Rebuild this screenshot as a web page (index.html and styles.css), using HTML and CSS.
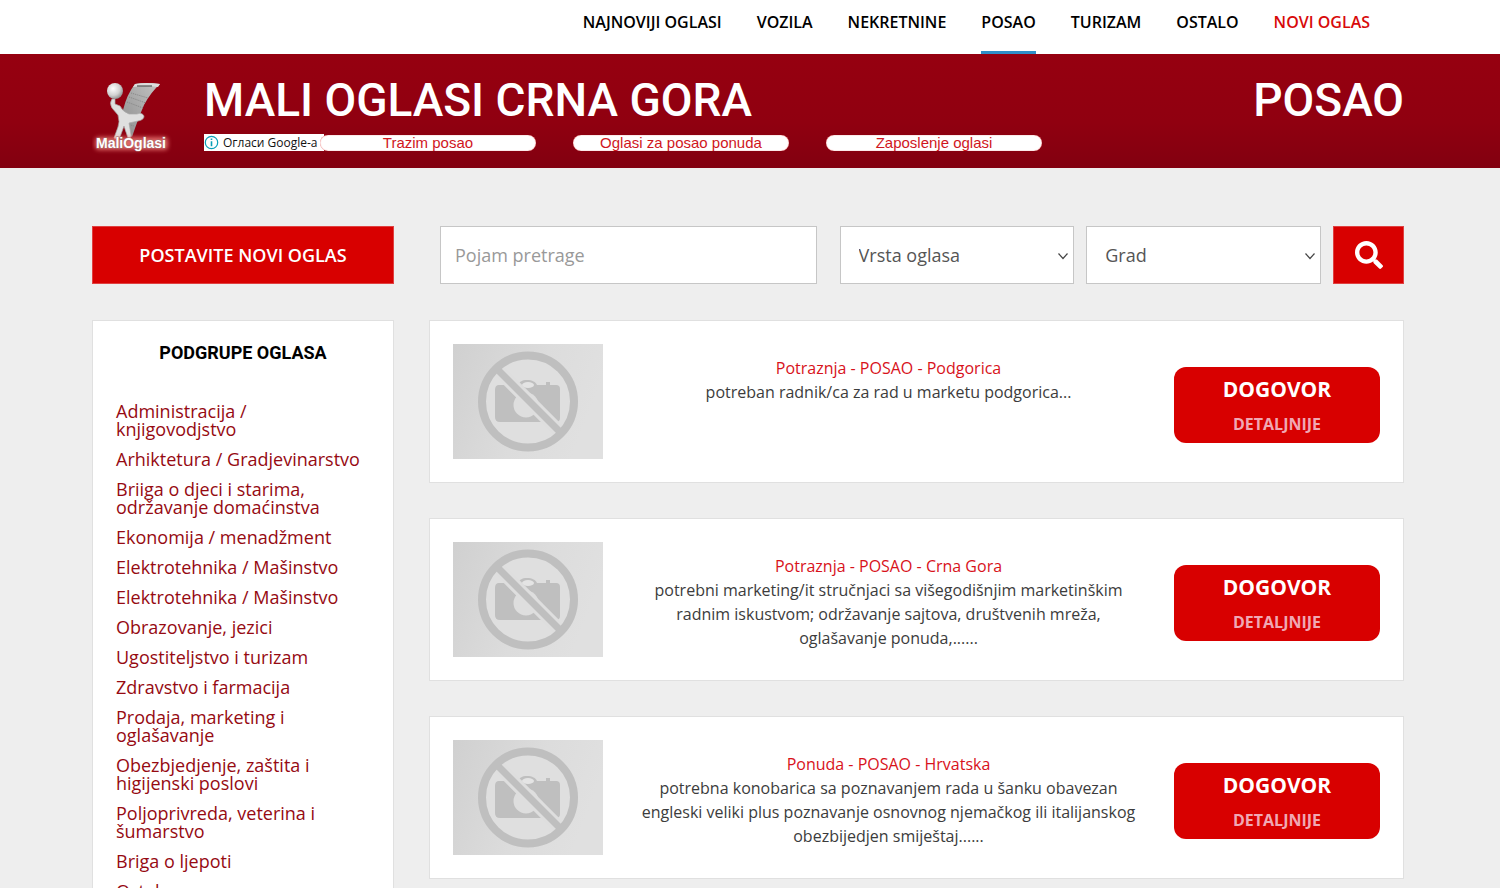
FILE: index.html
```html
<!DOCTYPE html>
<html lang="sr-ME">
<head>
<meta charset="utf-8">
<title>Mali Oglasi Crna Gora - Posao</title>
<link rel="stylesheet" href="styles.css">
</head>
<body>
<svg class="sprite" aria-hidden="true">
  <defs>
    <linearGradient id="photo-bg" x1="0" y1="0" x2="1" y2=".3">
      <stop offset="0" stop-color="#d0d0d0"/><stop offset=".6" stop-color="#dcdcdc"/><stop offset="1" stop-color="#e0e0e0"/>
    </linearGradient>
  </defs>
  <symbol id="no-photo" viewBox="0 0 150 115">
    <rect width="150" height="115" fill="url(#photo-bg)"/>
    <circle cx="75" cy="57.500" r="45" fill="#dfdfdf"/>
    <path d="M46 41h19c1-3 4-5 9-5s9 2 10 5h9v-3h4v3h6q4 0 4 4v29q0 4-4 4H47q-5 0-5-5V46q0-5 4-5z" fill="#bfbfbf"/>
    <ellipse cx="75" cy="41" rx="6" ry="3" fill="#e4e4e4"/>
    <circle cx="73" cy="61" r="12.500" fill="#dedede"/>
    <path d="M46 27 108 89" stroke="#dedede" stroke-width="13"/>
    <path d="M45 26 108 89" stroke="#bfbfbf" stroke-width="7"/>
    <circle cx="75" cy="57.500" r="46" fill="none" stroke="#bfbfbf" stroke-width="8"/>
  </symbol>
  <symbol id="chevron" viewBox="0 0 12 12"><path d="M1.500 3.500 6 8.500l4.500-5" fill="none" stroke="#444" stroke-width="1.200"/></symbol>
</svg>

<nav class="topnav" aria-label="Glavni meni">
  <a href="#">Najnoviji oglasi</a>
  <a href="#">Vozila</a>
  <a href="#">Nekretnine</a>
  <a href="#" class="is-active">Posao</a>
  <a href="#">Turizam</a>
  <a href="#">Ostalo</a>
  <a href="#" class="is-new">Novi oglas</a>
</nav>

<header class="banner">
  <a href="#" class="logo" aria-label="MaliOglasi">
    <svg width="80" height="76" viewBox="0 0 80 76">
      <defs>
        <radialGradient id="ball" cx=".38" cy=".35" r=".7"><stop offset="0" stop-color="#fff"/><stop offset=".6" stop-color="#d2d2d2"/><stop offset="1" stop-color="#8c8c8c"/></radialGradient>
        <linearGradient id="paper" x1="1" y1="0" x2="0" y2="1"><stop offset="0" stop-color="#c4c4c4"/><stop offset="1" stop-color="#8d8d8d"/></linearGradient>
        <filter id="glow" x="-20%" y="-60%" width="140%" height="220%"><feGaussianBlur stdDeviation="2.200"/></filter>
      </defs>
      <path d="M43 4Q54 2 68 4 59 12 52 25 46 39 40 57L34 52Q30 40 31 30 35 14 43 4z" fill="url(#paper)"/>
      <path d="M43 4Q54 2 68 4L66 7Q54 5 41 7z" fill="#ddd"/>
      <path d="M45 6h15" stroke="#555" stroke-width="1.200" fill="none"/>
      <path d="M39 13l17 5M37 17l17 6M35 22l16 6M35 38l9 2M35 44l7 2" stroke="#858585" stroke-width="1" stroke-dasharray="1 1" fill="none"/>
      <path d="M20 19Q17 23 20 28L26 35Q28 42 26 47L22 58Q25 60 28 57L32 46 36 58Q39 59 39 55L37 43 46 41Q52 40 52 36 50 32 45 34L37 34Q31 32 28 26L23 24V19z" fill="#dfdfdf" stroke="#aaa" stroke-width=".7"/>
      <circle cx="23" cy="11" r="8" fill="url(#ball)"/>
      <rect x="3" y="57" width="73" height="13" rx="4" fill="#ff9088" opacity=".7" filter="url(#glow)"/>
      <text class="logo-text" x="39" y="68" text-anchor="middle">MaliOglasi</text>
    </svg>
  </a>
  <div class="banner-main">
    <h1>MALI OGLASI CRNA GORA</h1>
    <div class="ads">
      <span class="ads-label">
        <svg width="15" height="15" viewBox="0 0 15 15" aria-hidden="true"><circle cx="7.500" cy="7.500" r="6.200" fill="none" stroke="#0a9fb8" stroke-width="1.200"/><path d="M7.500 6.200v5M7.500 3.600v1.500" stroke="#0a9fb8" stroke-width="1.600"/></svg>
        Огласи Google-a
      </span>
      <a href="#">Trazim posao</a>
      <a href="#">Oglasi za posao ponuda</a>
      <a href="#">Zaposlenje oglasi</a>
    </div>
  </div>
  <div class="banner-title">POSAO</div>
</header>

<main class="page">
  <aside class="side">
    <button type="button" class="post-btn">POSTAVITE NOVI OGLAS</button>
    <section class="groups">
      <h2>PODGRUPE OGLASA</h2>
      <ul>
        <li><a href="#">Administracija / knjigovodjstvo</a></li>
        <li><a href="#">Arhiktetura / Gradjevinarstvo</a></li>
        <li><a href="#">Briiga o djeci i starima, održavanje domaćinstva</a></li>
        <li><a href="#">Ekonomija / menadžment</a></li>
        <li><a href="#">Elektrotehnika / Mašinstvo</a></li>
        <li><a href="#">Elektrotehnika / Mašinstvo</a></li>
        <li><a href="#">Obrazovanje, jezici</a></li>
        <li><a href="#">Ugostiteljstvo i turizam</a></li>
        <li><a href="#">Zdravstvo i farmacija</a></li>
        <li><a href="#">Prodaja, marketing i oglašavanje</a></li>
        <li><a href="#">Obezbjedjenje, zaštita i higijenski poslovi</a></li>
        <li><a href="#">Poljoprivreda, veterina i šumarstvo</a></li>
        <li><a href="#">Briga o ljepoti</a></li>
        <li><a href="#">Ostalo</a></li>
      </ul>
    </section>
  </aside>

  <div class="content">
    <form class="search">
      <input type="text" placeholder="Pojam pretrage" aria-label="Pojam pretrage">
      <div class="picker">
        <select aria-label="Vrsta oglasa"><option>Vrsta oglasa</option></select>
        <svg width="12" height="12" aria-hidden="true"><use href="#chevron"/></svg>
      </div>
      <div class="picker">
        <select aria-label="Grad"><option>Grad</option></select>
        <svg width="12" height="12" aria-hidden="true"><use href="#chevron"/></svg>
      </div>
      <button type="button" aria-label="Traži">
        <svg width="28" height="28" viewBox="0 0 512 512" aria-hidden="true"><path fill="#fff" d="M505 442.700L405.300 343c-4.500-4.500-10.600-7-17-7H372c27.600-35.300 44-79.700 44-128C416 93.100 322.900 0 208 0S0 93.100 0 208s93.100 208 208 208c48.300 0 92.700-16.400 128-44v16.300c0 6.400 2.500 12.500 7 17l99.700 99.700c9.400 9.400 24.600 9.400 33.900 0l28.300-28.300c9.400-9.400 9.400-24.600.1-34zM208 336c-70.700 0-128-57.200-128-128 0-70.700 57.200-128 128-128 70.700 0 128 57.200 128 128 0 70.700-57.200 128-128 128z"/></svg>
      </button>
    </form>

    <div class="results">
      <article class="card">
        <svg class="thumb" width="150" height="115" role="img" aria-label="Bez slike"><use href="#no-photo"/></svg>
        <div class="info">
          <a href="#">Potraznja - POSAO - Podgorica</a>
          <p>potreban radnik/ca za rad u marketu podgorica...</p>
        </div>
        <a href="#" class="deal"><strong>DOGOVOR</strong><span>DETALJNIJE</span></a>
      </article>

      <article class="card">
        <svg class="thumb" width="150" height="115" role="img" aria-label="Bez slike"><use href="#no-photo"/></svg>
        <div class="info">
          <a href="#">Potraznja - POSAO - Crna Gora</a>
          <p>potrebni marketing/it stručnjaci sa višegodišnjim marketinškim radnim iskustvom; održavanje sajtova, društvenih mreža, oglašavanje ponuda,......</p>
        </div>
        <a href="#" class="deal"><strong>DOGOVOR</strong><span>DETALJNIJE</span></a>
      </article>

      <article class="card">
        <svg class="thumb" width="150" height="115" role="img" aria-label="Bez slike"><use href="#no-photo"/></svg>
        <div class="info">
          <a href="#">Ponuda - POSAO - Hrvatska</a>
          <p>potrebna konobarica sa poznavanjem rada u šanku obavezan engleski veliki plus poznavanje osnovnog njemačkog ili italijanskog obezbijedjen smiještaj......</p>
        </div>
        <a href="#" class="deal"><strong>DOGOVOR</strong><span>DETALJNIJE</span></a>
      </article>
    </div>
  </div>
</main>
</body>
</html>
```

FILE: styles.css
```css
* { box-sizing: border-box; }

body {
  margin: 0;
  background: #eee;
  color: #3c3c3c;
  font: 16px/24px "Open Sans", sans-serif;
  overflow-x: hidden;
}

a { text-decoration: none; }

.sprite { position: absolute; width: 0; height: 0; }

.topnav {
  display: flex;
  justify-content: flex-end;
  gap: 35px;
  padding: 0 130px 0 92px;
  background: #fff;
}

.topnav a {
  padding: 10px 0 17px;
  border-bottom: 3px solid transparent;
  color: #000;
  font-weight: 600;
  text-transform: uppercase;
}

.topnav .is-active { border-bottom-color: #2f8fc8; }
.topnav .is-new { color: #d80a0a; }

.banner {
  display: flex;
  align-items: flex-start;
  padding: 20px 96px 12px 92px;
  background: linear-gradient(#960010, #900010 60%, #820010);
  color: #fff;
}

.logo {
  flex: none;
  width: 112px;
  padding-top: 6px;
}

.logo svg { display: block; }

.logo-text {
  fill: #fff;
  stroke: #a06868;
  stroke-width: 1px;
  paint-order: stroke;
  font: bold 14px "Liberation Sans", sans-serif;
}

.banner-main { flex: 1; }

h1, .banner-title {
  margin: 0;
  font: 500 46px/52px Roboto, sans-serif;
}

.ads {
  display: flex;
  align-items: center;
  gap: 37px;
  margin-top: 8px;
  font: 15px/16px "Liberation Sans", sans-serif;
}

.ads a {
  width: 216px;
  border-radius: 8px;
  background: #fff;
  box-shadow: inset 0 0 1px #d22;
  color: #d0161d;
  text-align: center;
}

.ads-label {
  display: flex;
  align-items: center;
  gap: 4px;
  width: 120px;
  height: 17px;
  margin-right: -41px;
  background: #fff;
  color: #111;
  font: 12px/16px "Open Sans", sans-serif;
  white-space: nowrap;
}

.page {
  display: grid;
  grid-template-columns: 302px minmax(0, 1fr);
  gap: 35px;
  padding: 58px 96px 36px 92px;
}

.side, .content, .results {
  display: flex;
  flex-direction: column;
  gap: 36px;
}

.results { gap: 35px; }

.post-btn {
  height: 58px;
  border: 1px solid #e04040;
  background: #d80000;
  color: #fff;
  font: 600 18px/24px "Open Sans", sans-serif;
}

.groups {
  padding: 20px 23px;
  border: 1px solid #e0e0e0;
  background: #fff;
}

.groups h2 {
  margin: 0 0 37px;
  color: #000;
  font: 700 18px/24px Roboto, sans-serif;
  text-align: center;
}

.groups ul {
  display: flex;
  flex-direction: column;
  gap: 12px;
  margin: 0;
  padding: 0;
  list-style: none;
  font-size: 18px;
  line-height: 18px;
}

.groups a { color: #960a12; }

.search {
  display: grid;
  grid-template-columns: minmax(0, 388fr) minmax(0, 235fr) minmax(0, 235fr) 71px;
  gap: 12px;
  height: 58px;
  padding-left: 11px;
}

.search input, .search select {
  width: 100%;
  height: 58px;
  border: 1px solid #c6c6c6;
  border-radius: 0;
  background: #fff;
  color: #555;
  font: 18px/24px "Open Sans", sans-serif;
}

.search input {
  width: calc(100% - 11px);
  padding: 0 14px;
}

.search input::placeholder { color: #999; }

.picker { position: relative; }

.picker select {
  padding: 0 18px;
  appearance: none;
}

.picker svg {
  position: absolute;
  top: 24px;
  right: 5px;
  pointer-events: none;
}

.search button {
  display: grid;
  place-items: center;
  border: 1px solid #e04040;
  background: #d80000;
}

.card {
  display: flex;
  align-items: center;
  gap: 24px;
  padding: 23px;
  border: 1px solid #e0e0e0;
  background: #fff;
}

.thumb { flex: none; }

.info {
  flex: 1;
  align-self: flex-start;
  padding: 12px 11px 0;
  text-align: center;
}

.info a { color: #d8121b; }
.info p { margin: 0; }

.deal {
  display: flex;
  flex-direction: column;
  gap: 9px;
  width: 206px;
  margin-top: 7px;
  padding: 9px 0 6px;
  border-radius: 12px;
  background: #d80000;
  color: #fff;
  text-align: center;
  line-height: 26px;
}

.deal strong { font-size: 21px; }
.deal span { color: #f0a8b4; font-weight: 700; }
```
